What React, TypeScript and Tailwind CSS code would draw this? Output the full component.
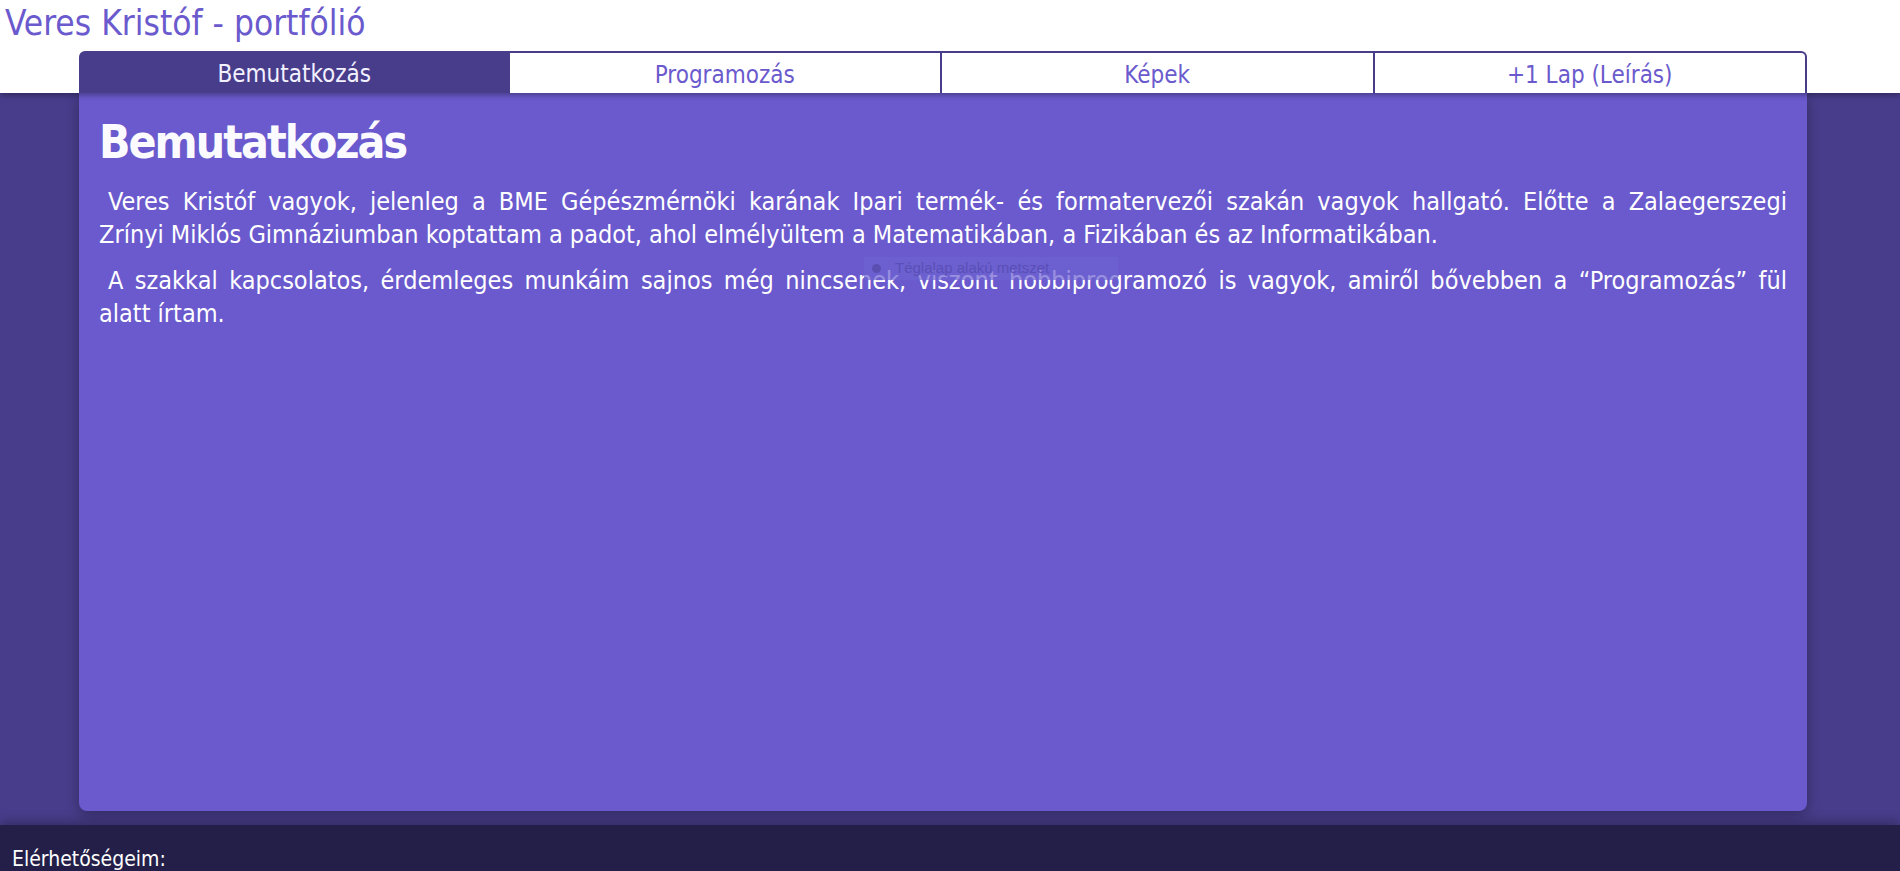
import React, { useState } from 'react'

const tabs = ['Bemutatkozás', 'Programozás', 'Képek', '+1 Lap (Leírás)']

export default function App() {
  const [active, setActive] = useState(0)

  return (
    <div className="relative min-h-screen bg-[#483d8b] font-['Liberation_Sans_Narrow','DejaVu_Sans_Condensed',sans-serif]">
      {/* header */}
      <header className="relative z-10 bg-white shadow-[0_2px_6px_rgba(0,0,0,0.35)]">
        <h1 className="h-[51px] pl-[5px] pt-[3px] text-[35px] leading-[40px] text-[#6a5acd]">
          Veres Kristóf - portfólió
        </h1>
        <nav className="ml-[79px] flex w-[1728px]">
          {tabs.map((t, i) => (
            <button
              key={t}
              type="button"
              onClick={() => setActive(i)}
              className={`flex h-[42px] flex-1 items-center justify-center pt-[4px] text-[24px] leading-none
                ${i === 0 ? 'rounded-tl-[6px]' : ''} ${i === tabs.length - 1 ? 'rounded-tr-[6px]' : ''}
                ${i === active
                  ? 'bg-[#483d8b] text-[#f3f1ff]'
                  : 'border-t-2 border-r-2 border-[#483d8b] bg-white text-[#6a5acd]'}`}
            >
              {t}
            </button>
          ))}
        </nav>
      </header>

      {/* content */}
      <main className="relative pb-[14px]">
        <section className="ml-[79px] h-[718px] w-[1728px] rounded-b-[8px] bg-[#6a5acd] px-[20px] pt-[16px] text-white shadow-[0_4px_14px_rgba(0,0,0,0.3)]">
          <h2 className="text-[46px] font-bold leading-[67px] tracking-[-2px] text-[#fbfaff]">Bemutatkozás</h2>
          <div className="mt-[9px] text-[25px] leading-[33px]">
            <p>
              <span className="block indent-[9px] text-justify [text-align-last:justify]">
                Veres Kristóf vagyok, jelenleg a BME Gépészmérnöki karának Ipari termék- és formatervezői szakán vagyok hallgató. Előtte a Zalaegerszegi
              </span>
              <span className="block">
                Zrínyi Miklós Gimnáziumban koptattam a padot, ahol elmélyültem a Matematikában, a Fizikában és az Informatikában.
              </span>
            </p>
            <p className="mt-[13px]">
              <span className="block indent-[9px] text-justify [text-align-last:justify]">
                A szakkal kapcsolatos, érdemleges munkáim sajnos még nincsenek, viszont hobbiprogramozó is vagyok, amiről bővebben a “Programozás” fül
              </span>
              <span className="block">alatt írtam.</span>
            </p>
          </div>
        </section>
      </main>

      {/* faint snipping label over the page */}
      <div className="pointer-events-none absolute left-[864px] top-[257px] flex h-[23px] w-[254px] items-center gap-[14px] bg-[#6e63d2]/70 pl-[8px] font-['Liberation_Sans',sans-serif] text-[15px] text-[#5a4fb6]">
        <span className="h-[9px] w-[9px] rounded-full bg-[#5a4fb0]" />
        Téglalap alakú metszet
      </div>

      {/* footer */}
      <footer className="relative h-[60px] bg-[#231f48] pl-[12px] pt-[19px] text-[21px] leading-[30px] text-white shadow-[0_-4px_10px_rgba(0,0,0,0.25)]">
        Elérhetőségeim:
      </footer>
    </div>
  )
}
